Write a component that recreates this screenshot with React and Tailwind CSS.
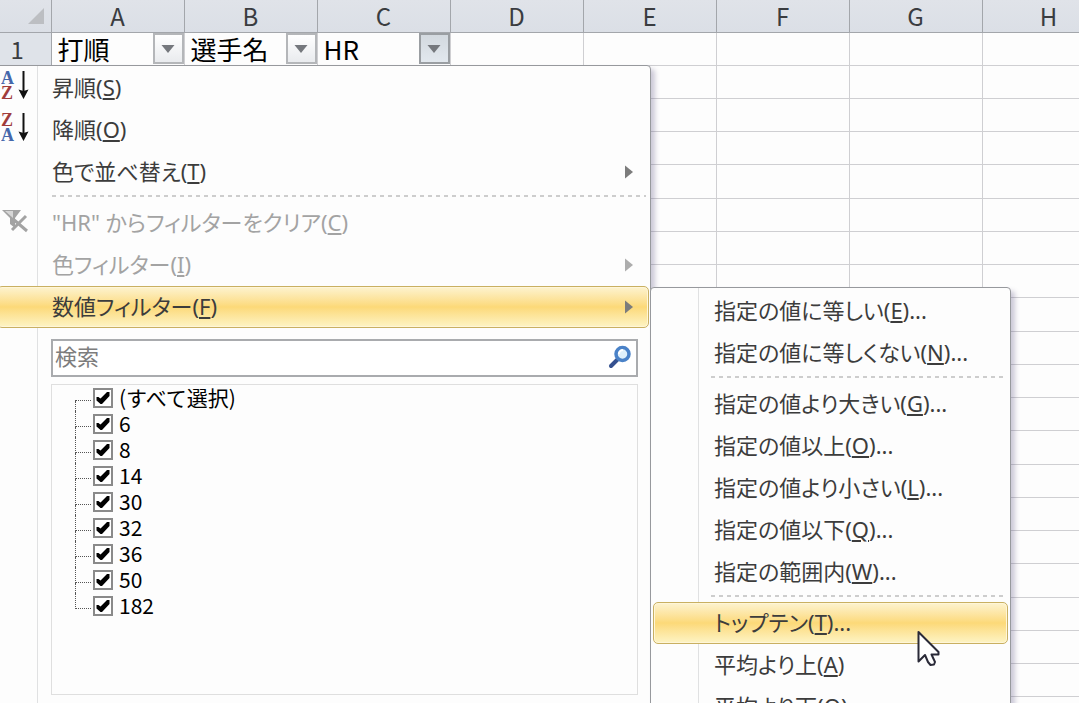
const COLUMNS = ["A", "B", "C", "D", "E", "F", "G", "H", "I", "J", "K", "L", "M", "N", "O", "P"];
const HEADINGS = ["打順", "選手名", "HR"];
const ROWS = Array.from({ length: 48 }, (_, i) => i + 2);
const VALUES = ["(すべて選択)", "6", "8", "14", "30", "32", "36", "50", "182"];

const SHEET_FONT = "font-['Noto_Sans_CJK_JP',sans-serif]";
const MENU_FONT = "font-['Noto_Sans','Noto_Sans_CJK_JP',sans-serif]";

function FilterButton({ label, active }) {
  return (
    <button
      type="button"
      aria-label={label}
      className={`flex h-[31px] w-[31px] shrink-0 items-center justify-center border-2 ${
        active
          ? "border-[#9a9ea2] bg-linear-to-b from-[#d3d9df] to-[#e2e8ee]"
          : "border-[#b4b6b9] bg-linear-to-b from-white to-[#e9ebee]"
      }`}
    >
      <svg viewBox="0 0 14 8" className="h-2 w-3.5" aria-hidden="true">
        <path d="M0.500 0H13.500L7 8Z" fill="#75787d" />
      </svg>
    </button>
  );
}

function Sheet() {
  return (
    <table className={`w-[2179px] table-fixed border-collapse bg-[#fdfdfd] ${SHEET_FONT}`}>
      <colgroup>
        <col className="w-[51px]" />
        {COLUMNS.map((c) => (
          <col key={c} className="w-[133px]" />
        ))}
      </colgroup>
      <thead>
        <tr className="h-8 bg-linear-to-b from-[#e0e3e9] to-[#dbdfe6]">
          <th className="border-r border-b border-[#a3a6ab] p-0">
            <svg viewBox="0 0 16 16" className="ml-[28px] h-4 w-4" aria-hidden="true">
              <path d="M16 0V16H0Z" fill="#bcbec2" />
            </svg>
          </th>
          {COLUMNS.map((c) => (
            <th
              key={c}
              scope="col"
              className="border-r border-b border-[#a3a6ab] p-0 text-2xl leading-7 font-normal text-[#3a3c40]"
            >
              {c}
            </th>
          ))}
        </tr>
      </thead>
      <tbody>
        <tr className="h-[33px]">
          <th
            scope="row"
            className="border-r border-b border-[#a3a6ab] bg-[#dfe3e9] p-0 pr-4 text-2xl leading-7 font-normal text-[#3a3c40]"
          >
            1
          </th>
          {COLUMNS.map((c, i) => (
            <td key={c} className="border-r border-b border-[#cfcfd2] p-0">
              {HEADINGS[i] && (
                <div className="flex items-center justify-between pl-1.5 text-[26px] leading-8 text-black">
                  <span>{HEADINGS[i]}</span>
                  <FilterButton label={`${HEADINGS[i]} フィルター`} active={i === 2} />
                </div>
              )}
            </td>
          ))}
        </tr>
        {ROWS.map((n) => (
          <tr key={n} className={n % 4 === 1 ? "h-[34px]" : "h-[33px]"}>
            <th
              scope="row"
              className="border-r border-b border-[#a3a6ab] bg-[#dfe3e9] p-0 text-2xl leading-7 font-normal"
            >
              {n}
            </th>
            {COLUMNS.map((c) => (
              <td key={c} className="border-r border-b border-[#cfcfd2] p-0" />
            ))}
          </tr>
        ))}
      </tbody>
    </table>
  );
}

function SortIcon({ first, second, firstColor, secondColor }) {
  return (
    <svg viewBox="0 0 28 30" className="h-[30px] w-7" aria-hidden="true">
      <g fontFamily="Liberation Serif" fontWeight="bold" fontSize="18">
        <text x="0" y="13" fill={firstColor}>{first}</text>
        <text x="0" y="28" fill={secondColor}>{second}</text>
      </g>
      <path d="M22.500 0V21" stroke="#111" strokeWidth="2" />
      <path d="M17.500 18.500L22.500 20L27.500 18.500L22.500 28Z" fill="#111" />
    </svg>
  );
}

function ClearFilterIcon() {
  return (
    <svg viewBox="0 0 28 24" className="h-6 w-7" aria-hidden="true">
      <path d="M1 1H20L14 9V19L9 15V9Z" fill="#a3a3a3" />
      <path d="M4 2H12L12 9Z" fill="#d6d6d6" />
      <path d="M12 10L26 22M25 7L11 21" stroke="#a3a3a3" strokeWidth="3" fill="none" />
    </svg>
  );
}

function MenuItem({ label, accessKey, suffix = "", icon, arrow, disabled, active, submenu }) {
  return (
    <li className={submenu ? "px-0.5" : "pr-px"}>
      <button
        type="button"
        disabled={disabled}
        aria-haspopup={arrow ? "menu" : undefined}
        className={`flex h-[42px] w-full items-center rounded-[5px] border text-left text-[22px] leading-8 whitespace-nowrap ${
          disabled ? "text-[#a3a3a3]" : "text-[#3c3c3c]"
        } ${
          active
            ? "border-[#c9b062] bg-linear-to-b from-[#fdf3cf] via-[#fcd978] to-[#fdf4c4] inset-ring-1 inset-ring-[#fff6d8]"
            : "border-transparent"
        }`}
      >
        <span className={`flex shrink-0 pb-1 ${submenu ? "w-[60px]" : "w-[54px] pl-[3px]"}`}>{icon}</span>
        <span className="grow pb-[3px]">
          {label}(<u className="decoration-2 underline-offset-2">{accessKey}</u>){suffix}
        </span>
        {arrow && (
          <svg viewBox="0 0 8 14" className="mr-[15px] h-3.5 w-2" aria-hidden="true">
            <path d="M0 0.500L8 7L0 13.500Z" fill={disabled ? "#adadad" : "#7c7c7c"} />
          </svg>
        )}
      </button>
    </li>
  );
}

function Separator({ submenu }) {
  return (
    <li role="separator" className={`flex h-[9px] pt-0.5 pr-1 ${submenu ? "pl-[60px]" : "pl-[55px]"}`}>
      <span className="h-0.5 grow bg-[repeating-linear-gradient(to_right,#cdcdcd_0_4px,transparent_4px_8px)]" />
    </li>
  );
}

function ValueRow({ value, first, last }) {
  return (
    <li>
      <label className="flex h-[26px] items-center text-[21px] leading-[22px] text-black">
        <span className="mr-0.5 flex w-4 flex-col self-stretch" aria-hidden="true">
          <span className={`h-4 border-b border-dotted border-[#555] ${first ? "" : "border-l"}`} />
          <span className={`grow border-dotted border-[#555] ${last ? "" : "border-l"}`} />
        </span>
        <span className="mr-1.5 grid pb-px">
          <input
            type="checkbox"
            defaultChecked
            className="peer col-start-1 row-start-1 h-5 w-5 appearance-none border-2 border-[#8a8a8a] bg-white"
          />
          <svg
            viewBox="0 0 20 20"
            className="pointer-events-none col-start-1 row-start-1 hidden h-5 w-5 peer-checked:block"
            aria-hidden="true"
          >
            <path d="M3.500 9H5.500L7.500 10.500L14 4H16.500V8L9 16H7.500L3.500 12.500Z" fill="#000" />
          </svg>
        </span>
        <span className="pb-[3px]">{value}</span>
      </label>
    </li>
  );
}

function SearchIcon() {
  return (
    <svg viewBox="0 0 24 24" className="h-6 w-6" aria-hidden="true">
      <path d="M3 21L10 14" stroke="#34508f" strokeWidth="4" strokeLinecap="round" />
      <circle cx="14.500" cy="9" r="6.500" fill="#dff0fb" stroke="#4a82c8" strokeWidth="3.500" />
      <path d="M11 9A4 4 0 0 1 15 5" stroke="#fff" strokeWidth="2" fill="none" />
    </svg>
  );
}

function FilterMenu() {
  return (
    <div
      className={`absolute top-[65px] -left-1 w-[655px] rounded-[4px] border border-[#97999d] bg-[#fdfdfd] bg-[linear-gradient(to_right,transparent_40px,#e0e1e2_40px,#e0e1e2_41px,transparent_41px)] pt-px pb-10 shadow-[4px_4px_5px_rgba(90,80,130,0.3)] ${MENU_FONT}`}
    >
      <ul className="[font-feature-settings:'palt']">
        <MenuItem
          label="昇順"
          accessKey="S"
          icon={<SortIcon first="A" second="Z" firstColor="#4567ab" secondColor="#a03c3c" />}
        />
        <MenuItem
          label="降順"
          accessKey="O"
          icon={<SortIcon first="Z" second="A" firstColor="#a03c3c" secondColor="#4567ab" />}
        />
        <MenuItem label="色で並べ替え" accessKey="T" arrow />
        <Separator />
        <MenuItem label={'"HR" からフィルターをクリア'} accessKey="C" icon={<ClearFilterIcon />} disabled />
        <MenuItem label="色フィルター" accessKey="I" arrow disabled />
        <MenuItem label="数値フィルター" accessKey="F" arrow active />
      </ul>
      <div className="mt-[11px] mr-3 ml-[54px] flex h-[38px] items-center border-2 border-[#a9abae] bg-white pr-1">
        <input
          type="text"
          aria-label="検索"
          placeholder="検索"
          className="h-full min-w-0 grow pb-1 pl-0.5 text-[22px] text-black outline-none placeholder:text-[#7d7d7d]"
        />
        <button type="button" aria-label="検索を実行" className="pb-0.5">
          <SearchIcon />
        </button>
      </div>
      <ul
        className={`mt-[7px] mr-3 ml-[54px] min-h-[311px] border border-[#dfdfdf] bg-[#fdfdfd] pl-[23px] ${SHEET_FONT}`}
      >
        {VALUES.map((v, i) => (
          <ValueRow key={v} value={v} first={i === 0} last={i === VALUES.length - 1} />
        ))}
      </ul>
    </div>
  );
}

function NumberFilterMenu() {
  return (
    <div
      className={`absolute top-[287px] left-[650px] w-[361px] rounded-[4px] border border-[#97999d] bg-[#fdfdfd] bg-[linear-gradient(to_right,transparent_47px,#e0e1e2_47px,#e0e1e2_48px,transparent_48px)] py-0.5 shadow-[4px_4px_5px_rgba(90,80,130,0.3)] ${MENU_FONT}`}
    >
      <ul className="[font-feature-settings:'palt']">
        <MenuItem submenu label="指定の値に等しい" accessKey="E" suffix="..." />
        <MenuItem submenu label="指定の値に等しくない" accessKey="N" suffix="..." />
        <Separator submenu />
        <MenuItem submenu label="指定の値より大きい" accessKey="G" suffix="..." />
        <MenuItem submenu label="指定の値以上" accessKey="O" suffix="..." />
        <MenuItem submenu label="指定の値より小さい" accessKey="L" suffix="..." />
        <MenuItem submenu label="指定の値以下" accessKey="Q" suffix="..." />
        <MenuItem submenu label="指定の範囲内" accessKey="W" suffix="..." />
        <Separator submenu />
        <MenuItem submenu label="トップテン" accessKey="T" suffix="..." active />
        <MenuItem submenu label="平均より上" accessKey="A" />
        <MenuItem submenu label="平均より下" accessKey="O" />
      </ul>
    </div>
  );
}

function Pointer() {
  return (
    <svg
      viewBox="0 0 24 38"
      className="pointer-events-none absolute top-[630px] left-[917px] h-[38px] w-6"
      aria-hidden="true"
    >
      <path
        d="M1.500 2V31.500L8 25L11 32L13.500 35L17 34.500L18 32L14.500 24.500H21.500V22Z"
        fill="#fff"
        stroke="#2a2a38"
        strokeWidth="2"
        strokeLinejoin="round"
      />
    </svg>
  );
}

export default function App() {
  return (
    <main className="relative h-screen overflow-hidden bg-[#fdfdfd]">
      <Sheet />
      <FilterMenu />
      <NumberFilterMenu />
      <Pointer />
    </main>
  );
}
